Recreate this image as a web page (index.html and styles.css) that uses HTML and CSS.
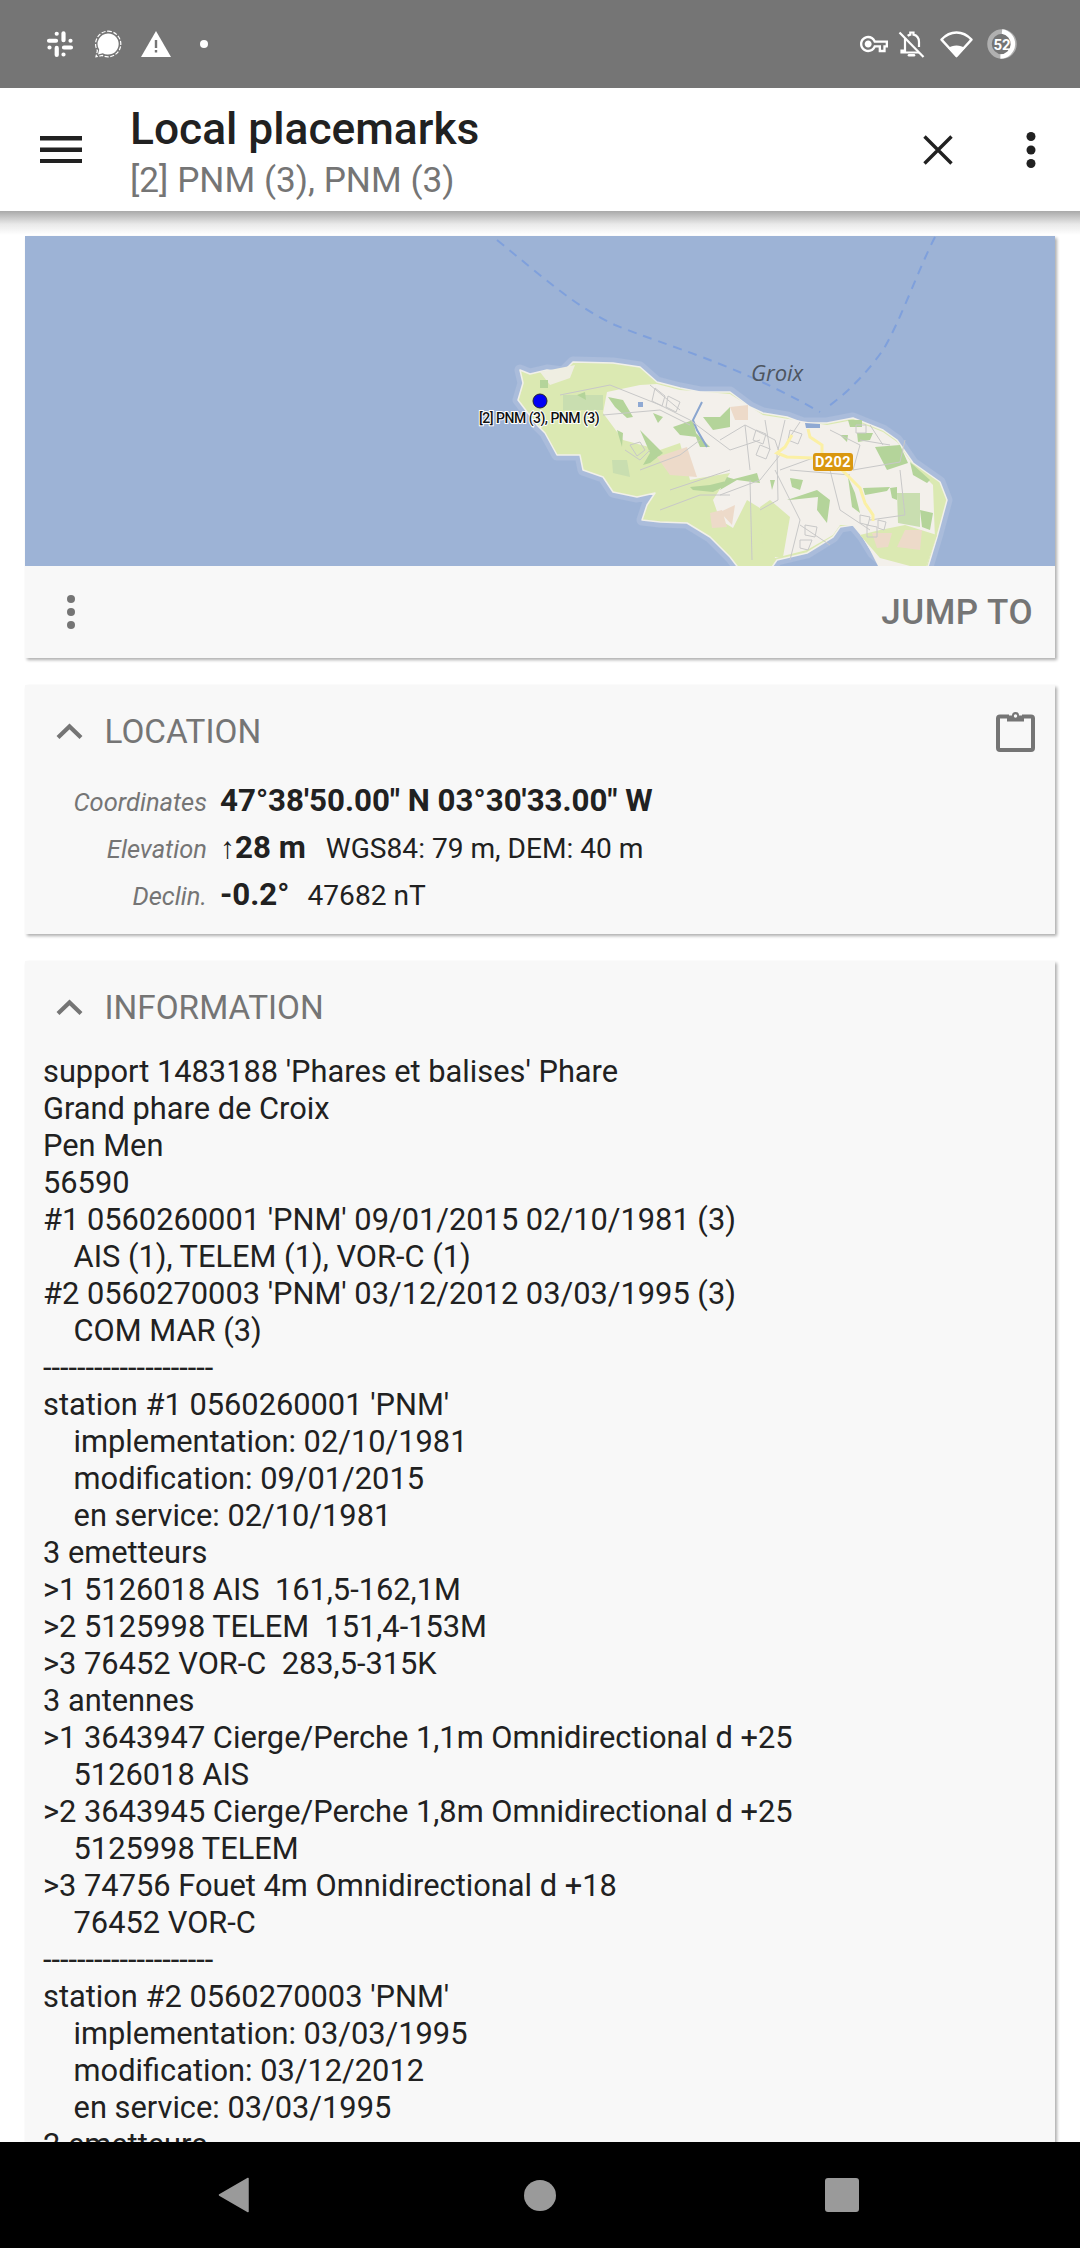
FILE: index.html
```html
<!DOCTYPE html>
<html lang="en">
<head>
<meta charset="utf-8">
<title>Local placemarks</title>
<link rel="stylesheet" href="styles.css">
</head>
<body>
<div class="screen">
  <header class="statusbar">
    <div class="status-left">
      <svg class="ic-slack" viewBox="0 0 24 24" fill="none" stroke="#fff" stroke-width="3.6" stroke-linecap="round">
        <path d="M2.6 9.2H8.6M9.2 3.2h.01M15 2.8V8.8M21 9.2h.01M21.4 15H15.4M15 21h.01M9.2 21.4V15.4M3 15h.01"/>
      </svg>
      <svg class="ic-signal" viewBox="0 0 28 28">
        <path d="M14 3.4a10.6 10.6 0 1 1-5.2 19.8L4 24.4l1.2-4.8A10.6 10.6 0 0 1 14 3.4z" fill="#fff"/>
        <path d="M14 1.2a12.8 12.8 0 1 1-5.8 24.2L2 26.8l1.4-6.2A12.8 12.8 0 0 1 14 1.2z" fill="none" stroke="#fff" stroke-width="1.2" stroke-dasharray="4 1.6"/>
      </svg>
      <svg class="ic-warn" viewBox="0 0 30 26">
        <path d="M15 0L30 26H0z" fill="#fff"/>
        <path d="M13.8 9h2.4v8h-2.4zM13.8 19h2.4v2.6h-2.4z" fill="#757575"/>
      </svg>
      <span class="status-dot"></span>
    </div>
    <div class="status-right">
      <svg class="ic-key" viewBox="0 0 24 24" fill="#fff"><path d="M22,19h-6v-4h-2.68c-1.14,2.42-3.6,4-6.32,4c-3.86,0-7-3.14-7-7s3.14-7,7-7c2.72,0,5.17,1.58,6.32,4H24v6h-2V19z M18,17h2v-4h2v-2H11.94l-0.23-0.67C11.01,8.34,9.11,7,7,7c-2.76,0-5,2.24-5,5s2.24,5,5,5c2.11,0,4.01-1.34,4.71-3.33L11.94,13H18V17z M7,15c-1.65,0-3-1.35-3-3s1.35-3,3-3s3,1.35,3,3S8.65,15,7,15z"/></svg>
      <svg class="ic-bell" viewBox="0 0 27 27" fill="none" stroke="#fff" stroke-width="2.2">
        <path d="M1.5 1.5L25.5 26"/>
        <path d="M7 7.5V19.5H3.5V21.5H21M21 16V11c0-3.8-2.2-6.6-5.5-7.4V1.5h-3.2v2.1c-1 .2-1.9.7-2.6 1.3"/>
        <path d="M11 24.2h5" stroke-width="2.6" stroke-linecap="round"/>
      </svg>
      <svg class="ic-wifi" viewBox="0 0 33 27">
        <path d="M16.5 25L1.5 8.6C5.6 4.2 10.8 1.5 16.5 1.5S27.4 4.2 31.5 8.6z" fill="none" stroke="#fff" stroke-width="2.4" stroke-linejoin="round"/>
        <path d="M16.5 26.5L8 17c2.4-1.5 5.2-2.4 8.5-2.4S22.6 15.5 25 17z" fill="#fff"/>
      </svg>
      <svg class="ic-batt" viewBox="0 0 30 30">
        <circle cx="15" cy="15" r="12.5" fill="none" stroke="#b0b0b0" stroke-width="4.5"/>
        <path d="M15 2.5A12.5 12.5 0 0 1 13.4 27.4" fill="none" stroke="#fff" stroke-width="4.5"/>
        <text x="15" y="20.5" text-anchor="middle" class="batt-text">52</text>
      </svg>
    </div>
  </header>

  <div class="appbar">
    <svg class="ic-menu" viewBox="0 0 42 27" fill="#212121"><path d="M0 0h42v4.5H0zM0 11.500h42v4.500H0zM0 23h42v4.500H0z"/></svg>
    <div class="titles">
      <div class="title">Local placemarks</div>
      <div class="subtitle">[2] PNM (3), PNM (3)</div>
    </div>
    <svg class="ic-close" viewBox="0 0 30 30" fill="none" stroke="#212121" stroke-width="3.4"><path d="M1.5 1.5L28.5 28.5M28.5 1.5L1.5 28.5"/></svg>
    <svg class="ic-more" viewBox="0 0 10 36" fill="#212121"><circle cx="5" cy="4.5" r="4.5"/><circle cx="5" cy="18" r="4.5"/><circle cx="5" cy="31.5" r="4.5"/></svg>
  </div>

  <main class="content">
    <section class="card">
      <svg class="map" viewBox="0 0 1030 330">
        <defs>
          <filter id="soft" x="-5%" y="-5%" width="110%" height="110%"><feGaussianBlur stdDeviation="0.55"/></filter>
          <path id="isle" d="M520 370L530 374L547 370L563 372L573 362L613 363L640 367L657 382L680 388L700 392L730 392L750 407L763 413L787 417L803 423L827 423L853 418L883 430L897 440L913 463L940 482L947 500L937 537L927 570L893 570L873 553L863 537L853 525L840 527L833 537L807 553L777 560L770 570L740 570L730 557L710 537L687 523L660 522L642 520L647 505L655 493L637 497L613 492L603 477L583 470L580 455L557 455L545 433L537 425L518 400L523 383Z"/>
        </defs>
        <rect width="1030" height="330" fill="#9db3d6"/>
        <g transform="translate(-25 -236)">
          <g fill="none" stroke="#7fa0dc" stroke-width="2" stroke-dasharray="9 7">
            <path d="M497 240C538 273 575 307 615 325C669 347 734 363 820 412"/>
            <path d="M935 237C918 270 901 320 883 350C869 370 848 393 826 408"/>
          </g>
          <g filter="url(#soft)">
            <use href="#isle" fill="none" stroke="#aabcdb" stroke-width="11" stroke-linejoin="round"/>
            <use href="#isle" fill="#dbe9b2" stroke="#f1f0ea" stroke-width="1.5" stroke-linejoin="round"/>
            <path d="M607 392L640 385L657 384L680 390L730 394L763 415L827 425L853 420L883 432L897 442L913 465L933 485L935 540L925 570L880 570L870 550L860 533L853 525L840 525L833 535L807 550L775 558L768 530L763 510L747 500L733 528L720 520L713 500L730 473L700 478L690 480L680 443L660 450L623 440L603 413Z" fill="#f3f0eb"/>
            <path d="M540 372L575 365L570 378L550 385Z" fill="#efeee2"/>
            <path d="M860 535L880 558L925 570L937 535L905 525L880 530ZM760 507L770 500L790 517L783 557L763 557Z" fill="#dbe9b2"/>
            <path d="M563 395L603 395L603 410L563 410ZM612 460L627 460L630 477L613 473ZM897 493L920 493L920 527L898 523Z" fill="#c9deb0"/>
            <path d="M608 397L623 400L633 417L627 418L615 407ZM640 430L653 443L663 453L650 463L643 465L650 453ZM673 427L693 420L697 437L680 435ZM693 430L710 447L700 447ZM653 413L663 417L658 423ZM617 430L623 433L622 447ZM703 417L720 417L730 407L730 427L713 430ZM690 487L710 485L730 480L757 473L760 483L737 480L713 492L693 490ZM720 490L727 477L737 480ZM875 447L900 445L908 463L887 470ZM910 462L930 480L927 483L913 475ZM920 510L933 513L930 530L922 527ZM890 488L897 487L897 500L892 498ZM863 488L890 487L887 491L865 495ZM848 477L855 493L860 513L852 507ZM790 478L803 480L800 490L792 487ZM787 500L817 490L830 500L827 523L817 510L818 497L790 500ZM848 420L862 420L862 427L850 427ZM840 435L848 435L847 442ZM857 433L873 433L870 440L858 442ZM540 380L548 380L548 388L540 388ZM577 395L585 392L586 400ZM770 480L775 480L772 490Z" fill="#b4d49a"/>
            <path d="M657 457L687 447L697 477L670 475ZM710 513L722 510L727 527L712 528ZM730 407L748 405L748 420L735 420ZM872 533L892 533L888 547L877 548ZM905 530L922 530L920 550L897 547ZM720 512L735 505L732 525Z" fill="#eddac9"/>
            <path d="M702 402L693 420L697 430L707 447" fill="none" stroke="#8aa5cf" stroke-width="2"/>
            <path d="M638 402h5v5h-5zM805 423L820 424L820 428L806 428Z" fill="#8fa9d3"/>
            <g fill="none" stroke="#c8c8c8" stroke-width="1">
              <path d="M560 395L610 385L660 405L690 420L730 450L760 440M603 415L660 410L690 425M650 385L680 410M640 470L680 455L700 440M670 490L730 470M660 510L700 495L730 495M625 450L640 460L650 450"/>
              <path d="M720 440L745 425L775 440L780 455L760 480L720 495M777 453L778 500L760 510M750 480L752 560M800 422L790 437M813 458L780 470M853 470L900 462L905 440M860 440L890 445M870 425L883 445M830 470L840 510L870 530M870 520L905 515L900 470M775 470L800 520L790 560M800 525L830 545M745 425L750 470M765 420L770 450M785 420L778 450M830 430L860 445L853 470M790 470L850 475"/>
              <path d="M655 388l10 8-3 10-10-5zM668 396l12 6-4 10-10-5zM630 445l10-3 5 8-8 6zM756 430l10 4-3 10-10-4zM760 445l10 4-4 10-10-4zM790 430l12 4-4 10-10-4zM867 525l10 2 0 10-10 0zM860 515l10 2-2 8-8-2zM805 525l12 2-2 10-10-2zM800 540l12 0-4 10-8-2zM878 520l8 2-2 8-6-2zM856 425l10 0 0 8-10 0z"/>
            </g>
            <path d="M792 435L785 447L777 453L787 457L813 458M808 429L810 437L822 445L822 455M842 470L860 488L865 503L873 515L873 521" fill="none" stroke="#fbf0a5" stroke-width="3"/>
          </g>
        </g>
        <text class="map-place" x="726" y="145">Groix</text>
        <rect x="788" y="217" width="40" height="18" rx="3" fill="#d9970f"/>
        <text class="map-road" x="808" y="231" text-anchor="middle">D202</text>
        <circle cx="515" cy="165" r="7" fill="#0000f5" stroke="#223" stroke-width="1"/>
        <text class="map-label" x="454" y="187">[2] PNM (3), PNM (3)</text>
      </svg>
      <div class="card-actions">
        <svg class="ic-more-sm" viewBox="0 0 8 34" fill="#757575"><circle cx="4" cy="4" r="4"/><circle cx="4" cy="17" r="4"/><circle cx="4" cy="30" r="4"/></svg>
        <span class="jump">JUMP TO</span>
      </div>
    </section>

    <section class="card">
      <div class="card-head">
        <svg class="ic-chevron" viewBox="0 0 27 16" fill="none" stroke="#757575" stroke-width="4.2"><path d="M2 14.5L13.5 3.5L25 14.5"/></svg>
        <span class="card-title">LOCATION</span>
        <svg class="ic-clip" viewBox="0 0 39 42" fill="none" stroke="#757575" stroke-width="4"><path d="M13 6.5H4A2 2 0 0 0 2 8.5V38A2 2 0 0 0 4 40H35A2 2 0 0 0 37 38V8.5A2 2 0 0 0 35 6.5H26"/><path d="M11 11.5V5.5H16A3.5 3.5 0 0 1 23 5.5H28V11.5Z" fill="#757575" stroke="none"/><circle cx="19.5" cy="6" r="1.7" fill="#f8f8f8" stroke="none"/></svg>
      </div>
      <div class="loc-rows">
        <div class="loc-row"><span class="loc-label">Coordinates</span><span class="loc-value"><b>47°38'50.00" N 03°30'33.00" W</b></span></div>
        <div class="loc-row"><span class="loc-label">Elevation</span><span class="loc-value"><span class="arrow">↑</span><b>28 m</b><span class="loc-extra">WGS84: 79 m, DEM: 40 m</span></span></div>
        <div class="loc-row"><span class="loc-label">Declin.</span><span class="loc-value"><b>-0.2°</b><span class="loc-extra loc-extra-tight">47682 nT</span></span></div>
      </div>
    </section>

    <section class="card">
      <div class="card-head">
        <svg class="ic-chevron" viewBox="0 0 27 16" fill="none" stroke="#757575" stroke-width="4.2"><path d="M2 14.5L13.5 3.5L25 14.5"/></svg>
        <span class="card-title">INFORMATION</span>
      </div>
      <pre class="info">support 1483188 'Phares et balises' Phare
Grand phare de Croix
Pen Men
56590
#1 0560260001 'PNM' 09/01/2015 02/10/1981 (3)
    AIS (1), TELEM (1), VOR-C (1)
#2 0560270003 'PNM' 03/12/2012 03/03/1995 (3)
    COM MAR (3)
--------------------
station #1 0560260001 'PNM'
    implementation: 02/10/1981
    modification: 09/01/2015
    en service: 02/10/1981
3 emetteurs
&gt;1 5126018 AIS  161,5-162,1M
&gt;2 5125998 TELEM  151,4-153M
&gt;3 76452 VOR-C  283,5-315K
3 antennes
&gt;1 3643947 Cierge/Perche 1,1m Omnidirectional d +25
    5126018 AIS
&gt;2 3643945 Cierge/Perche 1,8m Omnidirectional d +25
    5125998 TELEM
&gt;3 74756 Fouet 4m Omnidirectional d +18
    76452 VOR-C
--------------------
station #2 0560270003 'PNM'
    implementation: 03/03/1995
    modification: 03/12/2012
    en service: 03/03/1995
2 emetteurs</pre>
    </section>
  </main>

  <nav class="navbar">
    <svg class="nav-back" viewBox="0 0 31 36" fill="#9a9a9a" stroke="#9a9a9a" stroke-width="1.5" stroke-linejoin="round"><path d="M30 1.5V34.5L1.5 18Z"/></svg>
    <span class="nav-home"></span>
    <span class="nav-recent"></span>
  </nav>
</div>
</body>
</html>
```

FILE: styles.css
```css
* { box-sizing: border-box; }
html, body { margin: 0; padding: 0; background: #fff; }
body { font-family: Roboto, "Noto Sans", sans-serif; color: #212121; }
.screen { width: 1080px; height: 2248px; display: flex; flex-direction: column; overflow: hidden; }

.statusbar { height: 88px; flex: none; background: #757575; display: flex; align-items: center; justify-content: space-between; padding: 0 63px 0 46px; }
.status-left, .status-right { display: flex; align-items: center; }
.status-left svg, .status-right svg { display: block; }
.ic-slack { width: 28px; height: 28px; margin-right: 20px; }
.ic-signal { width: 28px; height: 28px; margin-right: 19px; }
.ic-warn { width: 30px; height: 26px; margin-right: 29px; }
.status-dot { width: 8px; height: 8px; border-radius: 50%; background: #fff; }
.ic-key { width: 28px; height: 28px; margin-right: 10px; }
.ic-bell { width: 27px; height: 27px; margin-right: 15px; }
.ic-wifi { width: 33px; height: 27px; margin-right: 14px; }
.ic-batt { width: 30px; height: 30px; }
.batt-text { font: 700 15px "Roboto", sans-serif; fill: #fff; }

.appbar { height: 123px; flex: none; background: #fff; display: flex; align-items: center; padding: 0 44px 0 40px; }
.ic-menu { width: 42px; height: 27px; margin-right: 48px; flex: none; }
.titles { flex: 1; min-width: 0; }
.title { font-size: 44.3px; font-weight: 500; line-height: 52px; color: #212121; margin-top: 8px; }
.subtitle { font-size: 35.2px; line-height: 50px; color: #757575; }
.ic-close { width: 30px; height: 30px; margin-right: 73px; flex: none; }
.ic-more { width: 10px; height: 36px; flex: none; }

.content { flex: 1; min-height: 0; overflow: hidden; padding: 25px 25px 0; display: flex; flex-direction: column; gap: 27px; background: #fff linear-gradient(#a9a9a9, #e9e9e9 55%, #fff) no-repeat top / 100% 24px; }
.card { flex: none; background: #f8f8f8; box-shadow: 2px 2px 3px rgba(0, 0, 0, .32); }
.map { display: block; width: 1030px; height: 330px; }
.map-place { font: italic 400 22px "Open Sans", sans-serif; fill: #4d5560; }
.map-road { font: 700 14.5px "Roboto", sans-serif; fill: #fff; letter-spacing: .4px; }
.map-label { font: 500 14px "Roboto", sans-serif; fill: #111; stroke: #fff; stroke-width: 2px; paint-order: stroke; letter-spacing: -.5px; }

.card-actions { height: 92px; display: flex; align-items: center; justify-content: space-between; padding: 0 22px 0 42px; }
.ic-more-sm { width: 8px; height: 34px; }
.jump { font-size: 35px; font-weight: 500; color: #757575; letter-spacing: .5px; }

.card-head { display: flex; align-items: center; height: 46px; margin-top: 23px; padding: 0 20px 0 31px; }
.ic-chevron { width: 27px; height: 16px; flex: none; margin-right: 21.5px; }
.card-title { font-size: 33.3px; color: #757575; flex: 1; }
.ic-clip { width: 39px; height: 42px; flex: none; }
.loc-rows { padding: 28px 0 11px; }
.loc-row { display: flex; align-items: baseline; height: 47px; }
.loc-label { width: 182px; flex: none; text-align: right; font-size: 25.5px; font-style: italic; color: #757575; }
.loc-value { margin-left: 13px; font-size: 28.1px; color: #212121; }
.loc-value b { font-size: 31.3px; font-weight: 700; }
.arrow { font-size: 30px; }
.loc-extra { margin-left: 20px; }
.loc-extra-tight { margin-left: 18px; }

.info { margin: 23px 0 0; padding: 0 18px; font: 400 30.8px/37px Roboto, sans-serif; color: #212121; white-space: pre; }

.navbar { height: 106px; flex: none; background: #000; display: flex; align-items: center; padding-left: 218px; }
.nav-back { width: 31px; height: 36px; margin-right: 275px; }
.nav-home { width: 32px; height: 31px; border-radius: 50%; background: #9a9a9a; margin-right: 269px; }
.nav-recent { width: 34px; height: 34px; border-radius: 3px; background: #9a9a9a; }
```
